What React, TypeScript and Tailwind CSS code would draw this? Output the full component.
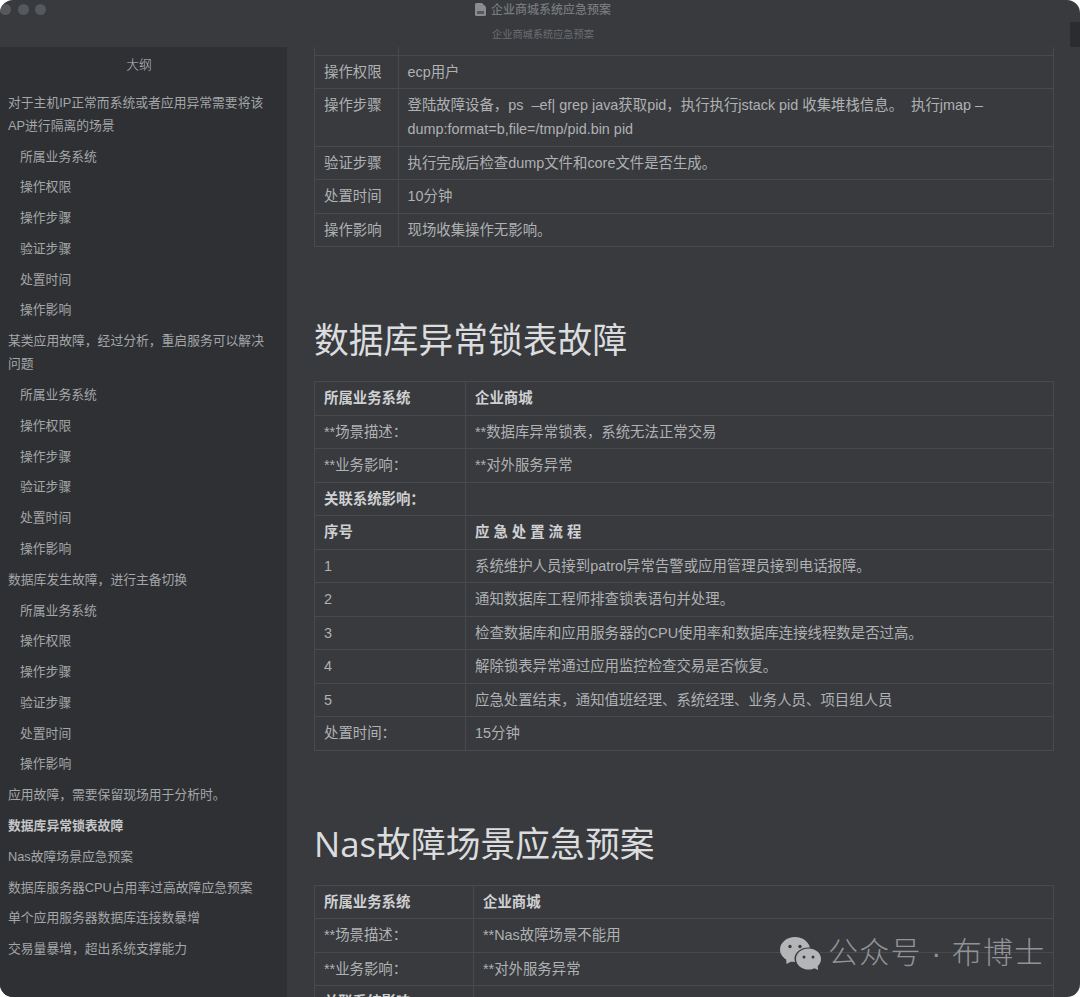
import React from 'react';

const OUTLINE: { text: string; sub?: boolean; bold?: boolean }[] = [
  { text: '对于主机IP正常而系统或者应用异常需要将该AP进行隔离的场景' },
  { text: '所属业务系统', sub: true },
  { text: '操作权限', sub: true },
  { text: '操作步骤', sub: true },
  { text: '验证步骤', sub: true },
  { text: '处置时间', sub: true },
  { text: '操作影响', sub: true },
  { text: '某类应用故障，经过分析，重启服务可以解决问题' },
  { text: '所属业务系统', sub: true },
  { text: '操作权限', sub: true },
  { text: '操作步骤', sub: true },
  { text: '验证步骤', sub: true },
  { text: '处置时间', sub: true },
  { text: '操作影响', sub: true },
  { text: '数据库发生故障，进行主备切换' },
  { text: '所属业务系统', sub: true },
  { text: '操作权限', sub: true },
  { text: '操作步骤', sub: true },
  { text: '验证步骤', sub: true },
  { text: '处置时间', sub: true },
  { text: '操作影响', sub: true },
  { text: '应用故障，需要保留现场用于分析时。' },
  { text: '数据库异常锁表故障', bold: true },
  { text: 'Nas故障场景应急预案' },
  { text: '数据库服务器CPU占用率过高故障应急预案' },
  { text: '单个应用服务器数据库连接数暴增' },
  { text: '交易量暴增，超出系统支撑能力' },
];

type Row = [string, string, boolean?];

const TOP_ROWS: Row[] = [
  ['', ''],
  ['操作权限', 'ecp用户'],
  ['操作步骤', '登陆故障设备，ps  –ef| grep java获取pid，执行执行jstack pid 收集堆栈信息。  执行jmap –dump:format=b,file=/tmp/pid.bin pid'],
  ['验证步骤', '执行完成后检查dump文件和core文件是否生成。'],
  ['处置时间', '10分钟'],
  ['操作影响', '现场收集操作无影响。'],
];

const LOCK_ROWS: Row[] = [
  ['所属业务系统', '企业商城', true],
  ['**场景描述：', '**数据库异常锁表，系统无法正常交易'],
  ['**业务影响：', '**对外服务异常'],
  ['关联系统影响：', '', true],
  ['序号', '应 急 处 置 流 程', true],
  ['1', '系统维护人员接到patrol异常告警或应用管理员接到电话报障。'],
  ['2', '通知数据库工程师排查锁表语句并处理。'],
  ['3', '检查数据库和应用服务器的CPU使用率和数据库连接线程数是否过高。'],
  ['4', '解除锁表异常通过应用监控检查交易是否恢复。'],
  ['5', '应急处置结束，通知值班经理、系统经理、业务人员、项目组人员'],
  ['处置时间：', '15分钟'],
];

const NAS_ROWS: Row[] = [
  ['所属业务系统', '企业商城', true],
  ['**场景描述：', '**Nas故障场景不能用'],
  ['**业务影响：', '**对外服务异常'],
  ['关联系统影响：', '', true],
];

function DocTable({ rows, colClass }: { rows: Row[]; colClass: string }) {
  return (
    <table className="w-full table-fixed border-collapse text-[14.4px] leading-[24px] text-[#afb1b3]">
      <tbody>
        {rows.map(([left, right, bold], i) => (
          <tr key={i} className={bold ? 'font-semibold text-[#cfd0d2]' : ''}>
            <td className={`${colClass} h-[33.5px] border border-[#484a4f] px-[9px] py-[4.25px] align-top`}>{left}</td>
            <td className="h-[33.5px] border border-[#484a4f] px-[9px] py-[4.25px] align-top whitespace-pre-wrap">{right}</td>
          </tr>
        ))}
      </tbody>
    </table>
  );
}

function Heading({ children }: { children: React.ReactNode }) {
  return (
    <h2 className="mt-[70px] mb-[18px] text-[34.8px] leading-[46px] font-normal text-[#dadcde] font-['Open_Sans','Noto_Sans_CJK_SC',sans-serif]">
      {children}
    </h2>
  );
}

function WeChatLogo() {
  return (
    <svg width="42" height="33" viewBox="0 0 42 33" className="shrink-0">
      <ellipse cx="15" cy="12.5" rx="15" ry="12.5" fill="#b4b5b7" />
      <path d="M6 20 L6.5 27 L14 23 Z" fill="#b4b5b7" />
      <circle cx="10" cy="9.5" r="1.7" fill="#383a3e" />
      <circle cx="20" cy="9.5" r="1.7" fill="#383a3e" />
      <ellipse cx="28.5" cy="22" rx="14" ry="11.5" fill="#383a3e" />
      <ellipse cx="28.5" cy="22" rx="12.5" ry="10.5" fill="#b4b5b7" />
      <path d="M32 30 L38 33 L37.5 27 Z" fill="#b4b5b7" />
      <circle cx="24" cy="20" r="1.5" fill="#383a3e" />
      <circle cx="33" cy="20" r="1.5" fill="#383a3e" />
    </svg>
  );
}

export default function App() {
  return (
    <div className="h-[997px] w-[1080px] overflow-hidden bg-white font-['Liberation_Sans','Noto_Sans_CJK_SC',sans-serif]">
      <div className="relative flex h-full flex-col overflow-hidden rounded-[13px] bg-[#383a3e]">
        <div className="relative h-[47px] shrink-0 pl-[6px] text-center">
          <div className="absolute top-[4px] left-0 flex gap-[6.5px]">
            <span className="h-[11px] w-[11px] rounded-full bg-[#55585c]" />
            <span className="h-[11px] w-[11px] rounded-full bg-[#55585c]" />
            <span className="h-[11px] w-[11px] rounded-full bg-[#55585c]" />
          </div>
          <div className="flex h-[19px] items-center justify-center gap-[5px] text-[12px] font-medium text-[#77797c]">
            <svg width="11" height="13" viewBox="0 0 11 13">
              <path d="M0 1.5 A1.5 1.5 0 0 1 1.5 0 H7 L11 4 V11.5 A1.5 1.5 0 0 1 9.5 13 H1.5 A1.5 1.5 0 0 1 0 11.5 Z" fill="#8a8c8f" />
              <rect x="2" y="8" width="7" height="3" fill="#55585c" />
            </svg>
            <span>企业商城系统应急预案</span>
          </div>
          <div className="mt-[8px] text-[10.2px] leading-[16px] text-[#6b6e72]">企业商城系统应急预案</div>
          <div className="absolute top-[22px] right-0 h-[25px] w-[10px] bg-[#2a2c2f]" />
        </div>

        <div className="flex min-h-0 flex-1">
          <aside className="w-[287px] shrink-0 bg-[#2e3033] text-[12.8px] leading-[23px] text-[#a4a6a9]">
            <div className="h-[39.9px] pt-[6px] pr-[9px] text-center leading-[24px] font-light text-[#bcbec0]">大纲</div>
            {OUTLINE.map((item, i) => (
              <div
                key={i}
                className={`py-[3.9px] pr-[16px] ${item.sub ? 'pl-[20px]' : 'pl-[8px]'} ${item.bold ? 'font-semibold text-[#c4c6c8]' : ''}`}
              >
                {item.text}
              </div>
            ))}
          </aside>

          <main className="min-w-0 flex-1 overflow-hidden pr-[26px] pl-[27px]">
            <div className="-mt-[26px]">
              <DocTable rows={TOP_ROWS} colClass="w-[83.5px]" />
              <Heading>数据库异常锁表故障</Heading>
              <DocTable rows={LOCK_ROWS} colClass="w-[151px]" />
              <Heading>Nas故障场景应急预案</Heading>
              <DocTable rows={NAS_ROWS} colClass="w-[159px]" />
            </div>
          </main>
        </div>

        <div className="absolute top-[936px] left-[780px] flex items-center gap-[6px] text-[30px] leading-[34px] font-light text-[#929396]">
          <WeChatLogo />
          <span className="tracking-[1.2px] whitespace-nowrap">公众号 · 布博士</span>
        </div>
      </div>
    </div>
  );
}
